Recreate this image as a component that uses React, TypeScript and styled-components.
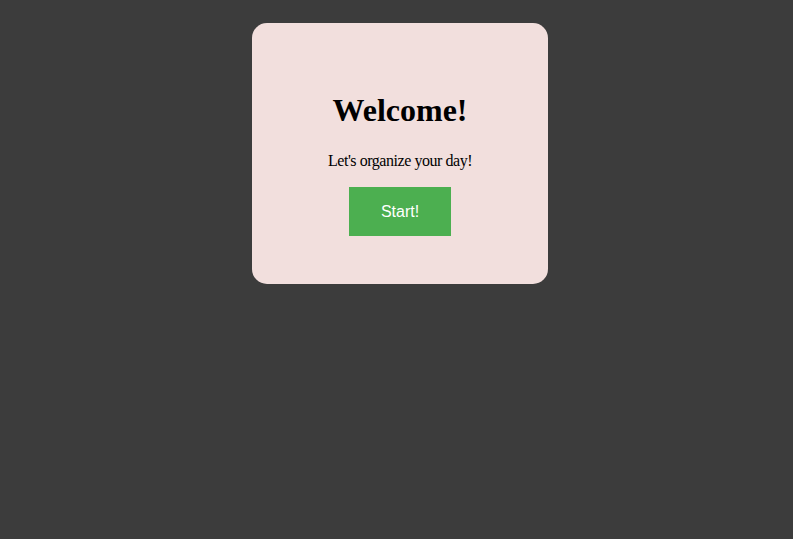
import React from "react";
import styled, { createGlobalStyle } from "styled-components";

const Global = createGlobalStyle`
  html, body {
    margin: 0;
    padding: 0;
    background: #3c3c3c;
    font-family: "Liberation Serif", "Times New Roman", serif;
  }
`;

const Page = styled.div`
  min-height: 539px;
  padding: 23px 0 0 252px;
  box-sizing: border-box;
`;

const Card = styled.div`
  width: 296px;
  box-sizing: border-box;
  padding: 48px;
  background: #f2dfdd;
  border-radius: 15px;
  text-align: center;
  color: #000;
`;

const Title = styled.h1`
  font-size: 32px;
  font-weight: bold;
  margin: 21.44px 0 22.44px;
`;

const Subtitle = styled.p`
  font-size: 16px;
  letter-spacing: -0.45px;
  margin: 16px 0 17px;
`;

const StartButton = styled.button`
  background: #4caf50;
  color: #fff;
  border: none;
  padding: 15px 32px;
  font-family: "Liberation Sans", Arial, sans-serif;
  font-size: 16px;
  line-height: 19px;
  vertical-align: top;
  cursor: pointer;
`;

export default function App() {
  return (
    <>
      <Global />
      <Page>
        <Card>
          <Title>Welcome!</Title>
          <Subtitle>Let's organize your day!</Subtitle>
          <StartButton>Start!</StartButton>
        </Card>
      </Page>
    </>
  );
}
